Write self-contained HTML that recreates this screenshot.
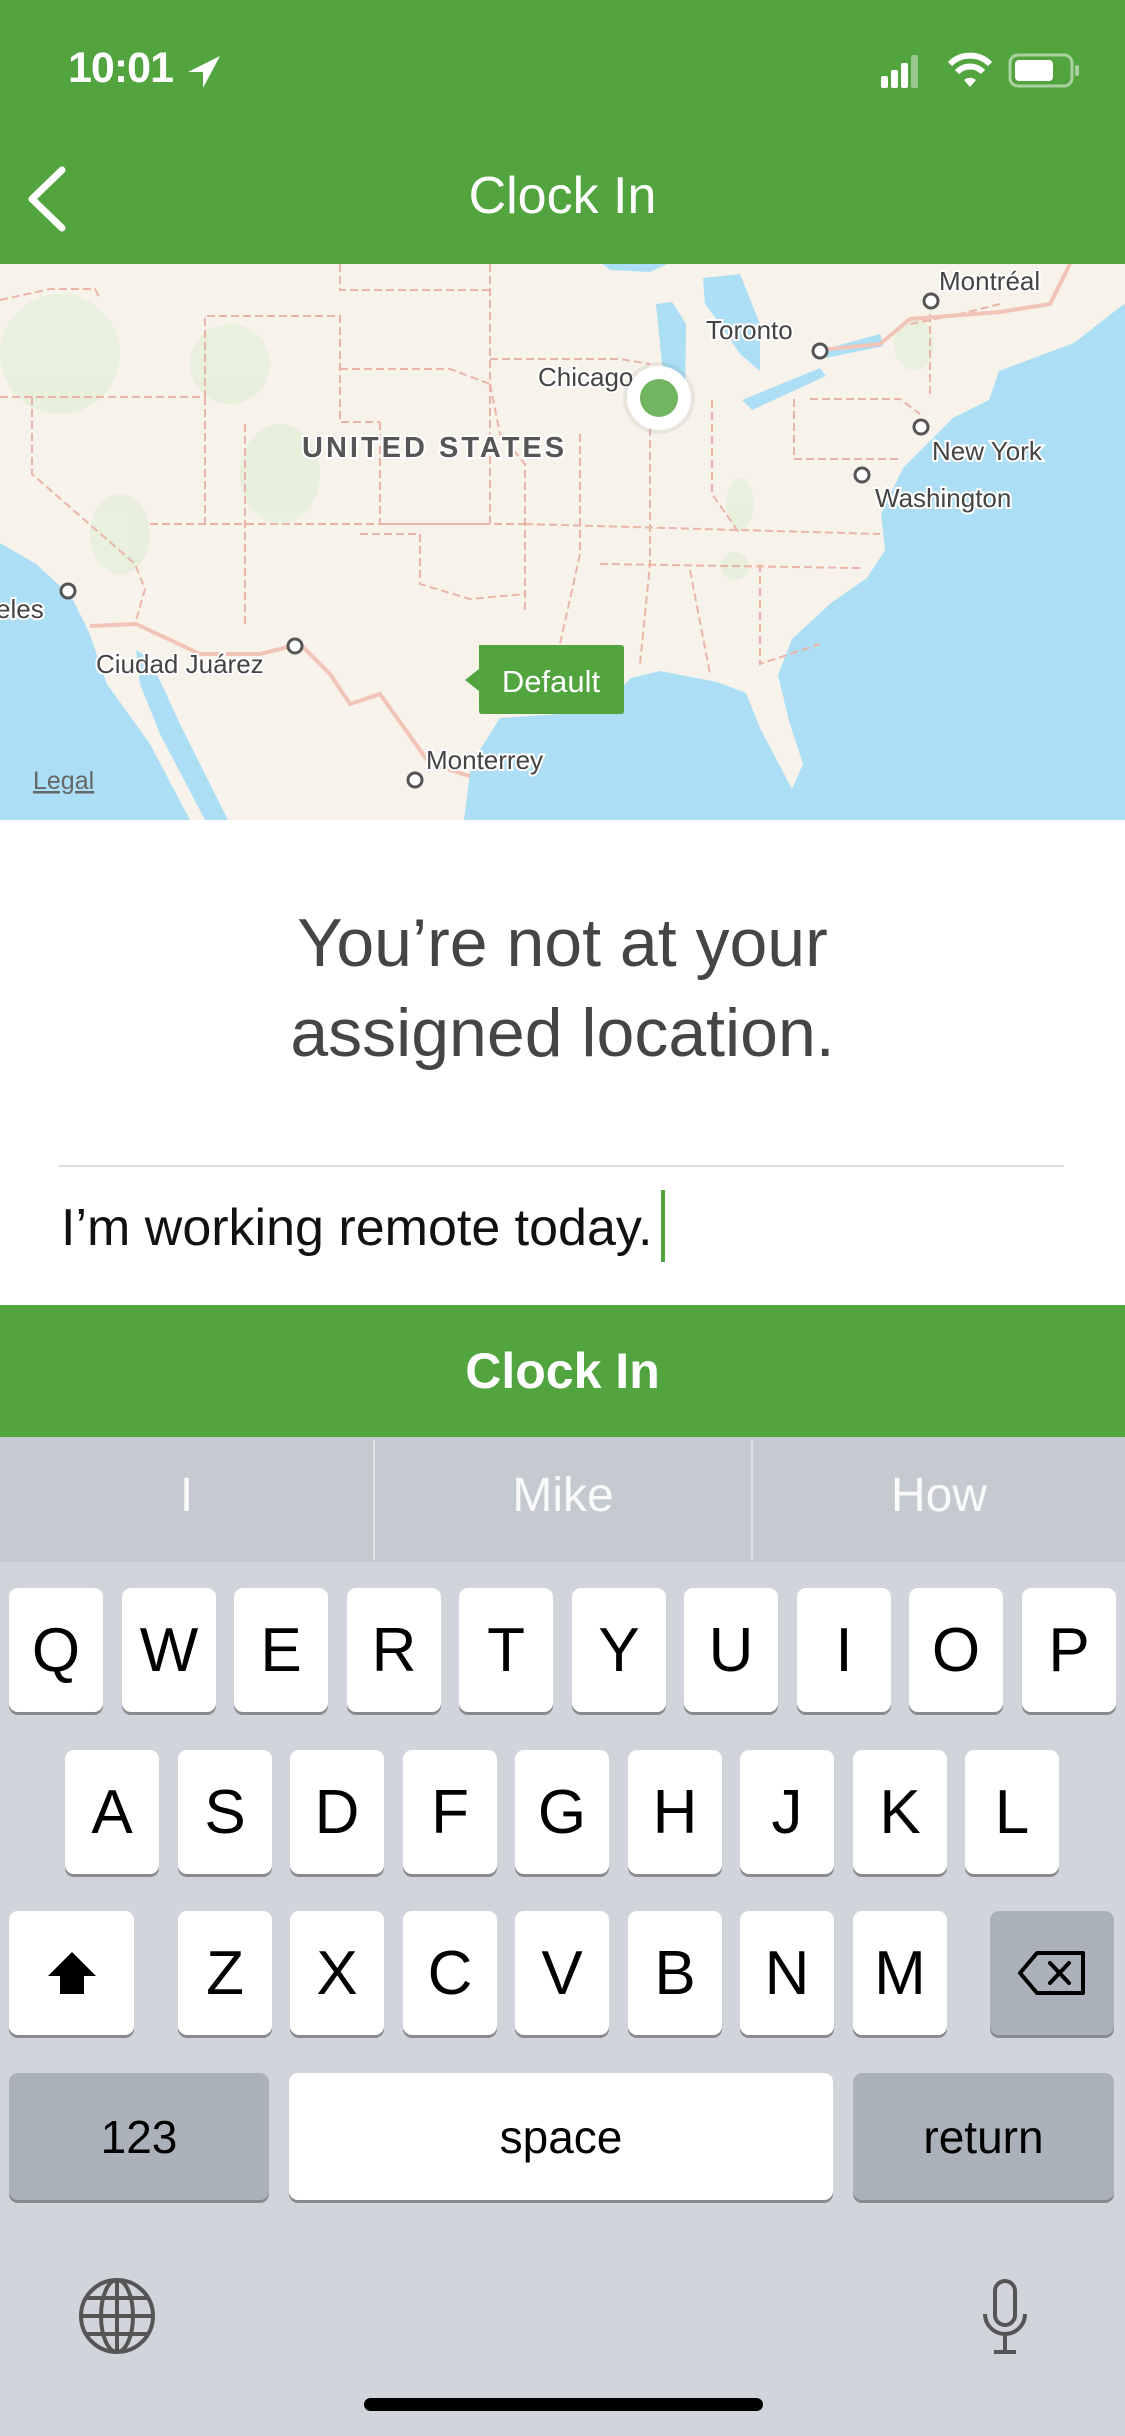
<!DOCTYPE html>
<html><head><meta charset="utf-8"><style>
*{margin:0;padding:0;box-sizing:border-box}
body{width:1125px;height:2436px;overflow:hidden;background:#fff;font-family:"Liberation Sans",sans-serif;position:relative}
.abs{position:absolute}
.green{background:#52a43f}
.key{position:absolute;background:#fff;border-radius:9px;box-shadow:0 3px 0 #898a8e;color:#000;font-size:62px;display:flex;align-items:center;justify-content:center;height:124px}
.sp{background:#abb1bb}
</style></head><body>
<div class="abs green" style="left:0;top:0;width:1125px;height:264px"></div>
<div class="abs" style="left:68px;top:44px;color:#fff;font-size:43px;font-weight:bold;letter-spacing:-1px">10:01</div>
<svg class="abs" style="left:186px;top:54px" width="36" height="36" viewBox="0 0 36 36"><path d="M34 2 L2 18 L17 18 L17 34 Z" fill="#fff"/></svg>
<svg class="abs" style="left:876px;top:50px" width="210" height="40" viewBox="0 0 210 40">
<rect x="5" y="26" width="7" height="12" rx="2" fill="#fff"/><rect x="15" y="20" width="7" height="18" rx="2" fill="#fff"/><rect x="25" y="13" width="7" height="25" rx="2" fill="#fff"/><rect x="35" y="5" width="7" height="33" rx="2" fill="#fff" opacity=".4"/>
<path d="M74 14 a28 28 0 0 1 40 0" stroke="#fff" stroke-width="6" fill="none"/><path d="M81 22 a18 18 0 0 1 26 0" stroke="#fff" stroke-width="6" fill="none"/><path d="M88 30 L94 37 L100 30 a9 9 0 0 0 -12 0z" fill="#fff"/>
<rect x="134" y="5" width="62" height="31" rx="8" stroke="#fff" stroke-opacity=".5" stroke-width="3" fill="none"/><rect x="139" y="10" width="38" height="21" rx="4" fill="#fff"/><rect x="199" y="15" width="4" height="11" rx="2" fill="#fff" opacity=".5"/>
</svg>
<svg class="abs" style="left:22px;top:166px" width="50" height="66" viewBox="0 0 50 66"><path d="M40 4 L10 33 L40 62" stroke="#fff" stroke-width="7" fill="none" stroke-linecap="round" stroke-linejoin="round"/></svg>
<div class="abs" style="left:0;width:1125px;top:166px;text-align:center;color:#fff;font-size:52px">Clock In</div>

<svg class="abs" style="left:0;top:264px" width="1125" height="556" viewBox="0 0 1125 556" font-family="Liberation Sans,sans-serif">
<rect width="1125" height="556" fill="#f8f3ea"/>
<g fill="#e3eed8" opacity=".7"><ellipse cx="60" cy="90" rx="60" ry="60"/><ellipse cx="230" cy="100" rx="40" ry="40"/><ellipse cx="280" cy="210" rx="40" ry="50"/><ellipse cx="120" cy="270" rx="30" ry="40"/><ellipse cx="914" cy="80" rx="20" ry="26"/><ellipse cx="740" cy="240" rx="14" ry="26"/><ellipse cx="735" cy="302" rx="14" ry="14"/></g>
<path d="M1125 40 L1120 43 L1074 79 L999 107 L989 136 L953 154 L903 204 L881 250 L885 286 L867 314 L831 339 L792 375 L778 411 L789 457 L803 500 L792 525 L760 464 L746 429 L717 418 L660 407 L631 414 L606 439 L560 450 L500 454 L471 500 L464 556 L1125 556Z" fill="#acdff5"/>
<path d="M0 279 L36 300 L71 332 L89 368 L107 420 L150 480 L190 556 L0 556Z" fill="#acdff5"/>
<path d="M136 386 L150 395 L180 460 L215 530 L228 556 L205 556 L160 470 L140 420Z" fill="#acdff5"/>
<path d="M603 0 L667 0 L650 8 L610 6Z M656 40 L672 38 L686 60 L685 136 L670 134 L662 100Z M703 14 L740 10 L760 60 L760 107 L740 90 L720 60 L705 40Z M742 136 L820 104 L826 112 L752 146Z M821 86 L880 70 L884 82 L826 94Z" fill="#acdff5"/>
<g stroke="#eab5a8" stroke-width="2" fill="none" stroke-dasharray="8 4">
<path d="M0 133 L205 133 L205 52 L340 52 L340 158 L380 158"/><path d="M340 0 L340 26 L490 26"/><path d="M490 0 L490 260"/><path d="M205 133 L205 260"/><path d="M32 133 L32 210 L135 300 L145 325 L135 360"/><path d="M245 160 L245 360"/><path d="M380 158 L380 260 L525 260"/><path d="M340 105 L450 105 L490 120"/><path d="M490 120 L500 170 L525 200 L525 350"/><path d="M525 260 L880 270"/><path d="M150 260 L490 260"/><path d="M360 270 L420 270 L420 320 L470 335 L525 330"/><path d="M580 170 L580 290 L560 380"/><path d="M650 140 L650 300 L640 400"/><path d="M712 136 L712 230 L740 270"/><path d="M794 135 L794 195 L900 195"/><path d="M810 135 L900 135 L920 150"/><path d="M760 300 L760 400 L820 380"/><path d="M600 300 L860 304"/><path d="M690 306 L710 410"/><path d="M0 36 L50 25 L95 25 L100 35"/><path d="M490 95 L620 95 L650 100"/><path d="M1000 40 L960 50 L910 60"/><path d="M930 50 L930 110 L930 130"/></g>
<path d="M90 362 L136 360 L200 390 L260 390 L300 380 L330 410 L350 440 L380 430 L430 500 L470 512" stroke="#f2c4b8" stroke-width="4" fill="none"/>
<path d="M820 86 L880 80 L910 55 L1000 48 L1050 40 L1070 0" stroke="#f2c4b8" stroke-width="4" fill="none"/>
<g fill="#fff" stroke="#555" stroke-width="3"><circle cx="931" cy="37" r="7"/><circle cx="820" cy="87" r="7"/><circle cx="921" cy="163" r="7"/><circle cx="862" cy="211" r="7"/><circle cx="68" cy="327" r="7"/><circle cx="295" cy="382" r="7"/><circle cx="415" cy="516" r="7"/></g>
<g fill="#444" font-size="26" stroke="#fff" stroke-width="4" paint-order="stroke">
<text x="939" y="26">Montréal</text><text x="706" y="75">Toronto</text><text x="538" y="122">Chicago</text>
<text x="932" y="196">New York</text><text x="875" y="243">Washington</text><text x="-4" y="354">eles</text>
<text x="96" y="409">Ciudad Juárez</text><text x="426" y="505">Monterrey</text>
<text x="302" y="193" font-weight="bold" font-size="29" letter-spacing="3" fill="#555">UNITED STATES</text></g>
<text x="33" y="525" font-size="25" fill="#666" text-decoration="underline">Legal</text>
<circle cx="659" cy="134" r="36" fill="#000" opacity=".06"/><circle cx="659" cy="134" r="32" fill="#fff"/><circle cx="659" cy="134" r="19" fill="#72b560"/>
<path d="M479 381 L621 381 Q624 381 624 384 L624 447 Q624 450 621 450 L482 450 Q479 450 479 447 L479 427 L465 416 L479 405Z" fill="#52a43f"/>
<text x="551" y="428" text-anchor="middle" fill="#fff" font-size="31">Default</text>
</svg>

<div class="abs" style="left:0;width:1125px;top:898px;text-align:center;color:#454545;font-size:68px;line-height:90px">You’re not at your<br>assigned location.</div>
<div class="abs" style="left:59px;top:1165px;width:1005px;height:2px;background:#ddd"></div>
<div class="abs" style="left:61px;top:1198px;font-size:52px;color:#111">I’m working remote today.</div>
<div class="abs" style="left:661px;top:1190px;width:4px;height:72px;background:#52a43f"></div>
<div class="abs green" style="left:0;top:1305px;width:1125px;height:132px;color:#fff;font-size:50px;font-weight:bold;text-align:center;line-height:132px">Clock In</div>

<div class="abs" style="left:0;top:1437px;width:1125px;height:999px;background:#d1d4da"></div>
<div class="abs" style="left:0;top:1437px;width:1125px;height:125px;background:#c5c9d0"></div>
<div class="abs" style="left:373px;top:1440px;width:2px;height:120px;background:#dfe1e5"></div>
<div class="abs" style="left:751px;top:1440px;width:2px;height:120px;background:#dfe1e5"></div>
<div class="abs" style="left:0;width:373px;top:1468px;text-align:center;font-size:48px;color:#fafafa">I</div>
<div class="abs" style="left:375px;width:376px;top:1468px;text-align:center;font-size:48px;color:#fafafa">Mike</div>
<div class="abs" style="left:753px;width:372px;top:1468px;text-align:center;font-size:48px;color:#fafafa">How</div>

<div class="key" style="left:9px;top:1588px;width:94px">Q</div>
<div class="key" style="left:122px;top:1588px;width:94px">W</div>
<div class="key" style="left:234px;top:1588px;width:94px">E</div>
<div class="key" style="left:347px;top:1588px;width:94px">R</div>
<div class="key" style="left:459px;top:1588px;width:94px">T</div>
<div class="key" style="left:572px;top:1588px;width:94px">Y</div>
<div class="key" style="left:684px;top:1588px;width:94px">U</div>
<div class="key" style="left:797px;top:1588px;width:94px">I</div>
<div class="key" style="left:909px;top:1588px;width:94px">O</div>
<div class="key" style="left:1022px;top:1588px;width:94px">P</div>

<div class="key" style="left:65px;top:1750px;width:94px">A</div>
<div class="key" style="left:178px;top:1750px;width:94px">S</div>
<div class="key" style="left:290px;top:1750px;width:94px">D</div>
<div class="key" style="left:403px;top:1750px;width:94px">F</div>
<div class="key" style="left:515px;top:1750px;width:94px">G</div>
<div class="key" style="left:628px;top:1750px;width:94px">H</div>
<div class="key" style="left:740px;top:1750px;width:94px">J</div>
<div class="key" style="left:853px;top:1750px;width:94px">K</div>
<div class="key" style="left:965px;top:1750px;width:94px">L</div>

<div class="key" style="left:9px;top:1911px;width:125px"><svg width="56" height="50" viewBox="0 0 56 50"><path d="M28 4 L52 28 L40 28 L40 46 L16 46 L16 28 L4 28Z" fill="#000"/></svg></div>
<div class="key" style="left:178px;top:1911px;width:94px">Z</div>
<div class="key" style="left:290px;top:1911px;width:94px">X</div>
<div class="key" style="left:403px;top:1911px;width:94px">C</div>
<div class="key" style="left:515px;top:1911px;width:94px">V</div>
<div class="key" style="left:628px;top:1911px;width:94px">B</div>
<div class="key" style="left:740px;top:1911px;width:94px">N</div>
<div class="key" style="left:853px;top:1911px;width:94px">M</div>
<div class="key sp" style="left:990px;top:1911px;width:124px"><svg width="70" height="46" viewBox="0 0 70 46"><path d="M20 3 L66 3 L66 43 L20 43 L3 23Z" stroke="#000" stroke-width="4" fill="none" stroke-linejoin="round"/><path d="M33 13 L52 33 M52 13 L33 33" stroke="#000" stroke-width="4" stroke-linecap="round"/></svg></div>

<div class="key sp" style="left:9px;top:2073px;width:260px;height:127px;font-size:46px">123</div>
<div class="key" style="left:289px;top:2073px;width:544px;height:127px;font-size:46px">space</div>
<div class="key sp" style="left:853px;top:2073px;width:261px;height:127px;font-size:46px">return</div>

<svg class="abs" style="left:77px;top:2276px" width="80" height="80" viewBox="0 0 80 80" fill="none" stroke="#555" stroke-width="4"><circle cx="40" cy="40" r="36"/><ellipse cx="40" cy="40" rx="16" ry="36"/><path d="M40 4 V76 M4 40 H76 M10 22 H70 M10 58 H70"/></svg>
<svg class="abs" style="left:980px;top:2278px" width="50" height="80" viewBox="0 0 50 80" fill="none" stroke="#555" stroke-width="4"><rect x="15" y="3" width="20" height="44" rx="10"/><path d="M5 36 a20 20 0 0 0 40 0 M25 56 V74 M14 74 H36"/></svg>
<div class="abs" style="left:364px;top:2398px;width:399px;height:13px;border-radius:7px;background:#000"></div>
</body></html>
